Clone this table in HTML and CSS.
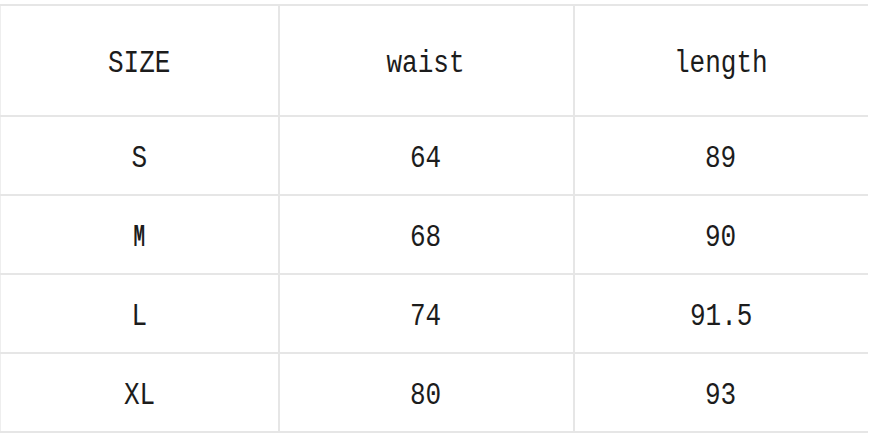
FILE: index.html
```html
<!DOCTYPE html>
<html>
<head>
<meta charset="utf-8">
<link rel="stylesheet" href="styles.css">
</head>
<body>
<table class="size-table">
  <colgroup>
    <col class="col-size">
    <col class="col-waist">
    <col class="col-length">
  </colgroup>
  <tr class="row-head">
    <td><span class="t">SIZE</span></td>
    <td><span class="t">waist</span></td>
    <td><span class="t">length</span></td>
  </tr>
  <tr class="row">
    <td><span class="t">S</span></td>
    <td><span class="t">64</span></td>
    <td><span class="t">89</span></td>
  </tr>
  <tr class="row">
    <td><span class="t t-bold">M</span></td>
    <td><span class="t">68</span></td>
    <td><span class="t">90</span></td>
  </tr>
  <tr class="row">
    <td><span class="t">L</span></td>
    <td><span class="t">74</span></td>
    <td><span class="t">91.5</span></td>
  </tr>
  <tr class="row">
    <td><span class="t">XL</span></td>
    <td><span class="t">80</span></td>
    <td><span class="t">93</span></td>
  </tr>
</table>
</body>
</html>
```

FILE: styles.css
```css
html, body {
  margin: 0;
  padding: 0;
  background: #ffffff;
}

.size-table {
  margin-top: 4px;
  width: 867px;
  border-collapse: collapse;
  table-layout: fixed;
  font-family: "Liberation Mono", "Noto Sans CJK SC", monospace;
  color: #1c1c1c;
}

.col-size { width: 278px; }
.col-waist { width: 295px; }
.col-length { width: 294px; }

.size-table td {
  border: 2px solid #e6e6e6;
  text-align: center;
  vertical-align: middle;
  padding: 0;
}

.size-table td:last-child {
  border-right: none;
}

.size-table td:first-child {
  border-left: 1px solid #eeeeee;
}

.row-head td {
  height: 109px;
}

.row td {
  height: 77px;
}

.t {
  display: inline-block;
  font-size: 31px;
  line-height: 1;
  transform: scaleX(0.84);
  padding-top: 5px;
}

.t-bold {
  font-weight: bold;
  transform: scaleX(0.62);
}
```
